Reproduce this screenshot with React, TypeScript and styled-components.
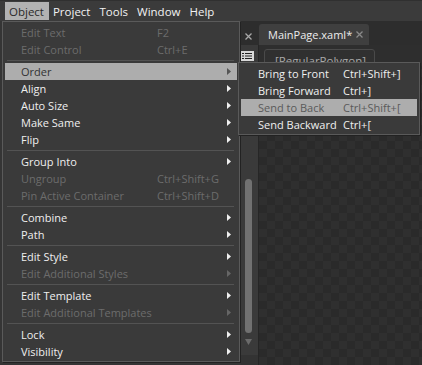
import React from 'react'
import styled, { createGlobalStyle } from 'styled-components'

interface MenuEntry {
  label?: string
  shortcut?: string
  disabled?: boolean
  submenu?: boolean
  active?: boolean
  separator?: boolean
}

const objectMenu: MenuEntry[] = [
  { label: 'Edit Text', shortcut: 'F2', disabled: true },
  { label: 'Edit Control', shortcut: 'Ctrl+E', disabled: true },
  { separator: true },
  { label: 'Order', submenu: true, active: true },
  { label: 'Align', submenu: true },
  { label: 'Auto Size', submenu: true },
  { label: 'Make Same', submenu: true },
  { label: 'Flip', submenu: true },
  { separator: true },
  { label: 'Group Into', submenu: true },
  { label: 'Ungroup', shortcut: 'Ctrl+Shift+G', disabled: true },
  { label: 'Pin Active Container', shortcut: 'Ctrl+Shift+D', disabled: true },
  { separator: true },
  { label: 'Combine', submenu: true },
  { label: 'Path', submenu: true },
  { separator: true },
  { label: 'Edit Style', submenu: true },
  { label: 'Edit Additional Styles', submenu: true, disabled: true },
  { separator: true },
  { label: 'Edit Template', submenu: true },
  { label: 'Edit Additional Templates', submenu: true, disabled: true },
  { separator: true },
  { label: 'Lock', submenu: true },
  { label: 'Visibility', submenu: true },
]

const orderMenu: MenuEntry[] = [
  { label: 'Bring to Front', shortcut: 'Ctrl+Shift+]' },
  { label: 'Bring Forward', shortcut: 'Ctrl+]' },
  { label: 'Send to Back', shortcut: 'Ctrl+Shift+[', active: true },
  { label: 'Send Backward', shortcut: 'Ctrl+[' },
]

const menuBarItems = ['Object', 'Project', 'Tools', 'Window', 'Help']

const GlobalStyle = createGlobalStyle`
  html, body {
    margin:0;
    padding:0;
    background:#2c2c2c;
  }
  body{
    font-family:"Open Sans","Noto Sans",sans-serif;
    font-size:11px;
  }
`

const Frame = styled.div`
  position:relative;
  width:422px;
  height:365px;
  overflow:hidden;
  display:flex;
  flex-direction:column;
  background:#2c2c2c;
`

const MenuBar = styled.div`
  height:21px;
  flex:none;
  display:flex;
  align-items:flex-start;
  padding-left:5px;
  background:#3b3b3b;
  box-sizing:border-box;
  border-top:1px solid #303030;
`

const MenuBarItem = styled.div<{ $open?: boolean }>`
  height:18px;
  margin-top:1px;
  padding:0 5px 0 4px;
  display:flex;
  align-items:center;
  color:${p => (p.$open ? '#2a2a2a' : '#f2f2f2')};
  background:${p => (p.$open ? '#b2b2b2' : 'transparent')};
  font-size:11.5px;
`

const Workspace = styled.div`
  flex:1;
  display:flex;
  min-height:0;
`

const LeftPanel = styled.div`
  width:241px;
  flex:none;
  background:#353535;
`

const DocArea = styled.div`
  flex:1;
  display:flex;
  flex-direction:column;
  min-width:0;
`

const TabStrip = styled.div`
  height:24px;
  flex:none;
  display:flex;
  align-items:flex-end;
  padding-left:4px;
  background:#2d2d2d;
`

const CloseGlyph = styled.span<{ $dim?: boolean }>`
  display:flex;
  align-items:center;
  justify-content:center;
  width:7px;
  height:7px;
  flex:none;
  color:${p => (p.$dim ? '#8a8a8a' : '#a8a8a8')};
  svg{ display:block; }
`

const StripClose = styled.div`
  height:21px;
  display:flex;
  align-items:center;
  padding-top:3px;
  box-sizing:border-box;
`

const Tab = styled.div`
  margin-left:7px;
  height:21px;
  width:110px;
  box-sizing:border-box;
  padding:0 6px 0 9px;
  display:flex;
  align-items:center;
  justify-content:space-between;
  gap:4px;
  background:#3f3f3f;
  border-radius:3px 3px 0 0;
  color:#ececec;
  font-size:11px;
`

const DocBody = styled.div`
  flex:1;
  display:flex;
  min-height:0;
`

const SideStrip = styled.div`
  width:17px;
  flex:none;
  display:flex;
  flex-direction:column;
  background:#3a3a3a;
  border-right:1px solid #262626;
`

const ListIcon = styled.div`
  margin:6px 0 0 -1px;
  width:14px;
  height:10px;
  flex:none;
  svg{ display:block; }
`

const ScrollTrack = styled.div`
  flex:1;
  margin-top:4px;
  display:flex;
  flex-direction:column;
  align-items:center;
  padding:0 0 10px;
`

const ScrollSpace = styled.div<{ $h: number }>`
  height:${p => p.$h}px;
  flex:none;
`

const ScrollThumb = styled.div`
  width:7px;
  height:154px;
  margin-left:-3px;
  border-radius:4px;
  background:#717171;
  flex:none;
`

const ScrollArrow = styled.div`
  margin-top:6px;
  margin-left:-3px;
  svg{ display:block; }
`

const ScrollFoot = styled.div`
  height:12px;
  flex:none;
  background:#333333;
`

const Canvas = styled.div`
  flex:1;
  display:flex;
  flex-direction:column;
  min-width:0;
  background:
    conic-gradient(#2f2f2f 25%, #2a2a2a 0 50%, #2f2f2f 0 75%, #2a2a2a 0) 0 0 / 16px 16px;
`

const CanvasHeader = styled.div`
  height:17px;
  flex:none;
  padding:4px 0 0 5px;
  background:#2e2e2e;
`

const Breadcrumb = styled.div`
  width:111px;
  height:22px;
  box-sizing:border-box;
  border:1px solid #4a4a4a;
  border-radius:3px;
  padding:3px 0 0 10px;
  color:#a8a8a8;
  font-size:11.5px;
  background:#303030;
`

const Menu = styled.div<{ $left: number; $top: number; $width: number }>`
  position:absolute;
  left:${p => p.$left}px;
  top:${p => p.$top}px;
  width:${p => p.$width}px;
  box-sizing:border-box;
  padding:2px 2px 1px;
  background:#3a3a3a;
  border:1px solid #5a5a5a;
  box-shadow:1px 1px 0 #222;
  z-index:2;
`

const MenuRow = styled.div<{ $active?: boolean; $disabled?: boolean; $sub?: boolean; $pad: number; $label: number }>`
  height:17px;
  display:flex;
  align-items:center;
  padding-left:${p => p.$pad}px;
  padding-right:6px;
  white-space:nowrap;
  background:${p => (p.$active ? '#adadad' : 'transparent')};
  color:${p =>
    p.$active ? (p.$sub ? '#5a5a5a' : '#333333') : p.$disabled ? '#6c6c6c' : '#efefef'};
  .label{
    width:${p => p.$label}px;
    flex:none;
  }
  .shortcut{
    flex:1;
  }
`

const Separator = styled.div`
  height:1px;
  margin:2px 3px 2px 2px;
  background:#535353;
`

const Arrow: React.FC<{ color: string }> = ({ color }) => (
  <svg width="4" height="7" viewBox="0 0 4 7">
    <polygon points="0,0 4,3.5 0,7" fill={color} />
  </svg>
)

const Cross: React.FC = () => (
  <svg width="7" height="7" viewBox="0 0 7 7">
    <path d="M0.5 0.5 L6.5 6.5 M6.5 0.5 L0.5 6.5" stroke="currentColor" strokeWidth="1.3" />
  </svg>
)

interface DropMenuProps {
  entries: MenuEntry[]
  left: number
  top: number
  width: number
  pad: number
  labelWidth: number
  sub?: boolean
}

const DropMenu: React.FC<DropMenuProps> = ({ entries, left, top, width, pad, labelWidth, sub }) => (
  <Menu $left={left} $top={top} $width={width}>
    {entries.map((e, i) =>
      e.separator ? (
        <Separator key={i} />
      ) : (
        <MenuRow
          key={i}
          $active={e.active}
          $disabled={e.disabled}
          $sub={sub}
          $pad={pad}
          $label={labelWidth}
        >
          <span className="label">{e.label}</span>
          <span className="shortcut">{e.shortcut}</span>
          {e.submenu && <Arrow color={e.active ? '#555' : e.disabled ? '#666' : '#f0f0f0'} />}
        </MenuRow>
      )
    )}
  </Menu>
)

const App: React.FC = () => {
  return (
    <Frame>
      <GlobalStyle />
      <MenuBar>
        {menuBarItems.map((m, i) => (
          <MenuBarItem key={m} $open={i === 0}>
            {m}
          </MenuBarItem>
        ))}
      </MenuBar>
      <Workspace>
        <LeftPanel />
        <DocArea>
          <TabStrip>
            <StripClose>
              <CloseGlyph>
                <Cross />
              </CloseGlyph>
            </StripClose>
            <Tab>
              <span>MainPage.xaml*</span>
              <CloseGlyph $dim>
                <Cross />
              </CloseGlyph>
            </Tab>
          </TabStrip>
          <DocBody>
            <SideStrip>
              <ListIcon>
                <svg width="14" height="10" viewBox="0 0 14 10">
                  <rect x="0" y="0" width="14" height="10" fill="#d8d8d8" />
                  <rect x="2" y="2" width="2" height="1" fill="#222" />
                  <rect x="5" y="2" width="7" height="1" fill="#222" />
                  <rect x="2" y="4.5" width="2" height="1" fill="#222" />
                  <rect x="5" y="4.5" width="7" height="1" fill="#222" />
                  <rect x="2" y="7" width="2" height="1" fill="#222" />
                  <rect x="5" y="7" width="7" height="1" fill="#222" />
                </svg>
              </ListIcon>
              <ScrollTrack>
                <ScrollSpace $h={114} />
                <ScrollThumb />
                <ScrollArrow>
                  <svg width="7" height="6" viewBox="0 0 7 6">
                    <polygon points="0,0 7,0 3.5,6" fill="#6a6a6a" />
                  </svg>
                </ScrollArrow>
              </ScrollTrack>
              <ScrollFoot />
            </SideStrip>
            <Canvas>
              <CanvasHeader>
                <Breadcrumb>[RegularPolygon]</Breadcrumb>
              </CanvasHeader>
            </Canvas>
          </DocBody>
        </DocArea>
      </Workspace>
      <DropMenu entries={objectMenu} left={2} top={21} width={238} pad={16} labelWidth={136} />
      <DropMenu entries={orderMenu} left={238} top={62} width={182} pad={17} labelWidth={85} sub />
    </Frame>
  )
}

export default App
